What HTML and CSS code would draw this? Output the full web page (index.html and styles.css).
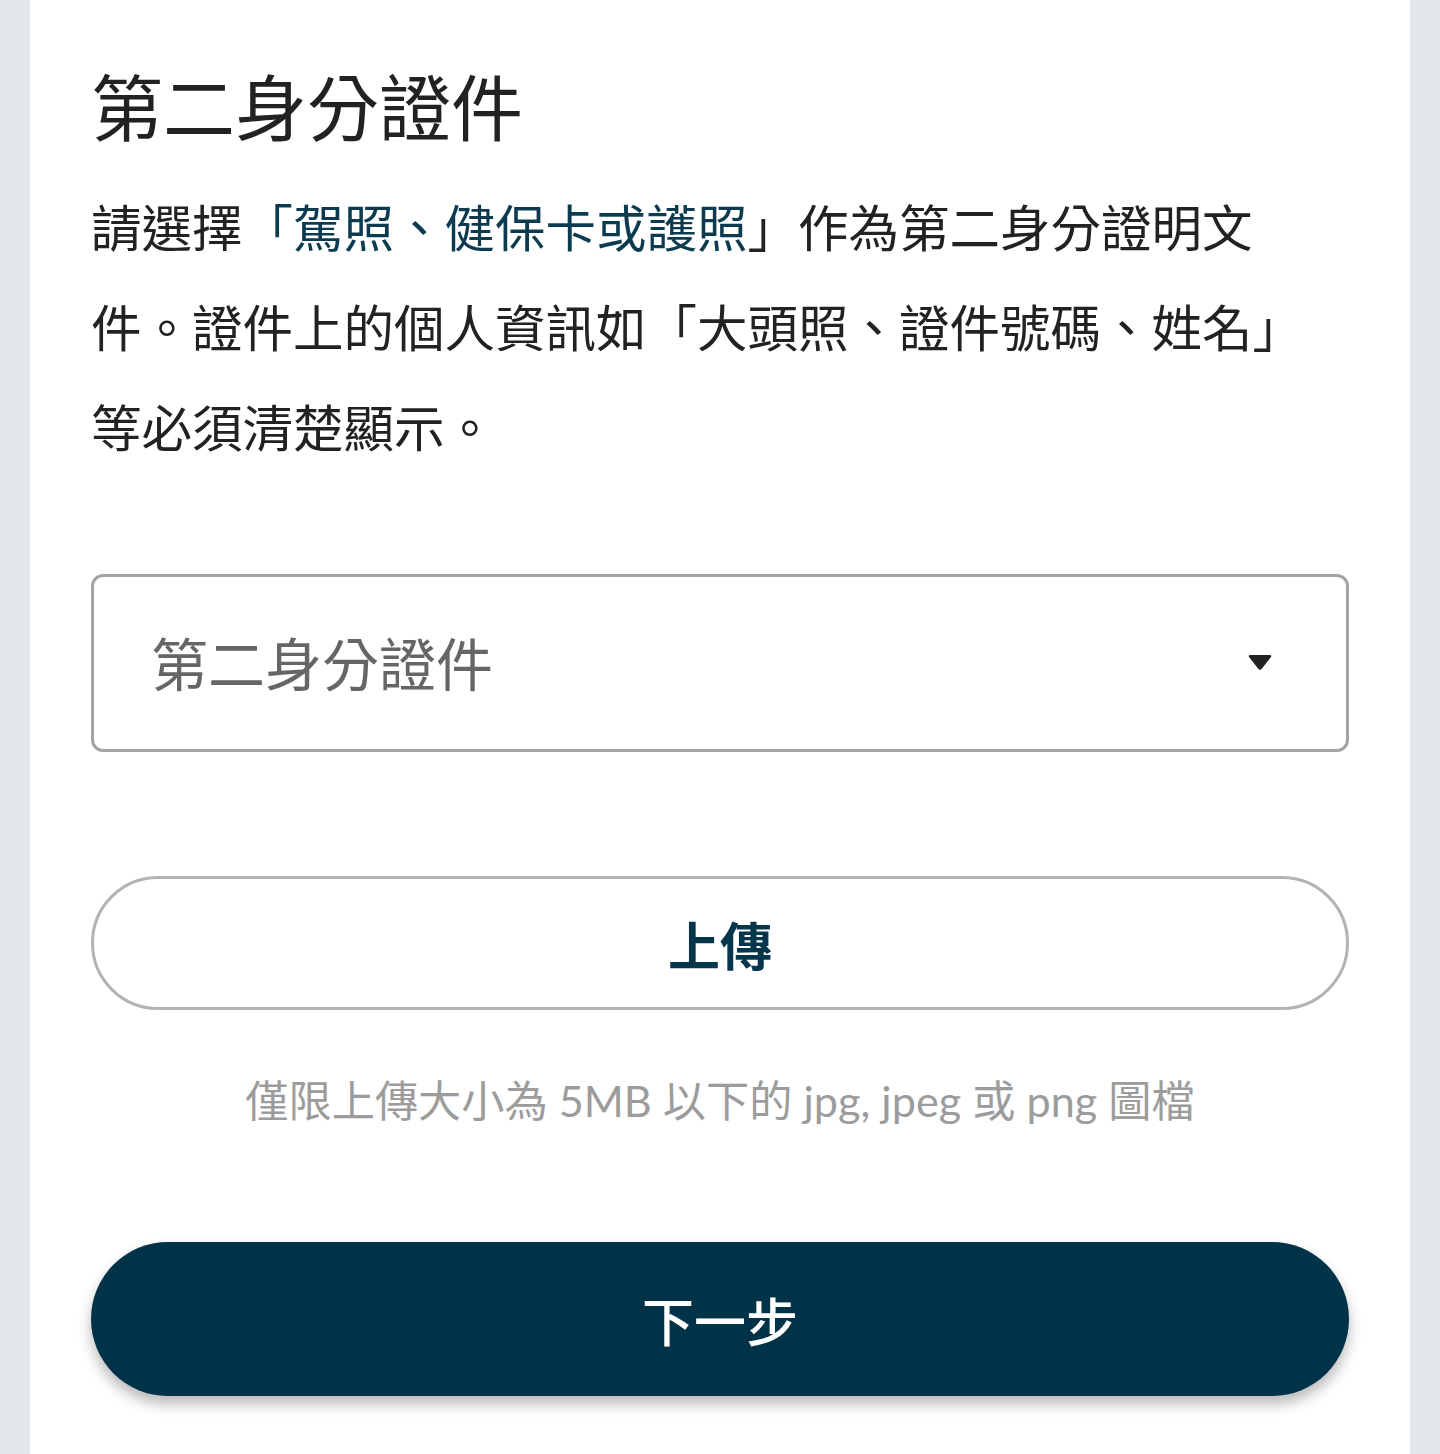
FILE: index.html
```html
<!DOCTYPE html>
<html lang="zh-Hant">
<head>
<meta charset="utf-8">
<title>第二身分證件</title>
<link rel="stylesheet" href="styles.css">
</head>
<body>
<main class="card">
  <h1 class="title">第二身分證件</h1>
  <p class="intro">請選擇<span class="accent">「駕照、健保卡或護照</span>」作為第二身分證明文件。證件上的個人資訊如「大頭照、證件號碼、姓名」等必須清楚顯示。</p>
  <div class="select">
    <span class="select-label">第二身分證件</span>
    <svg class="caret" width="26" height="18" viewBox="0 0 26 18" aria-hidden="true">
      <path d="M3.5 1 H22.5 Q25.5 1 23.6 3.4 L15 14.6 Q13 17 11 14.6 L2.4 3.4 Q0.5 1 3.5 1 Z" fill="#222"/>
    </svg>
  </div>
  <button class="upload" type="button">上傳</button>
  <p class="hint">僅限上傳大小為 5MB 以下的 jpg, jpeg 或 png 圖檔</p>
  <button class="next" type="button">下一步</button>
</main>
</body>
</html>
```
FILE: styles.css
```css
html, body {
  margin: 0;
  padding: 0;
}
body {
  background: #e2e7ea;
  font-family: "Noto Sans CJK TC", "Noto Sans", sans-serif;
  color: #222;
}
.card {
  margin: 0 30px;
  min-height: 1454px;
  background: #ffffff;
  padding: 54px 61px 0;
  box-sizing: border-box;
  display: flex;
  flex-direction: column;
}
.title {
  margin: 0;
  font-size: 72px;
  font-weight: 400;
  line-height: 100px;
  color: #222;
}
.intro {
  margin: 21px 0 0;
  max-width: 1240px;
  font-size: 50.5px;
  line-height: 100px;
  color: #222;
}
.accent {
  color: #0c3b50;
}
.select {
  margin-top: 99px;
  height: 178px;
  box-sizing: border-box;
  border: 3px solid #a3a3a3;
  border-radius: 12px;
  display: flex;
  align-items: center;
  justify-content: space-between;
  padding: 0 73px 4px 57px;
}
.select-label {
  font-size: 57px;
  color: #666;
  line-height: 1;
}
.caret {
  display: block;
  margin-top: 4px;
}
.upload {
  margin-top: 124px;
  height: 134px;
  border: 3px solid #b3b3b3;
  border-radius: 67px;
  background: #fff;
  font-family: "Noto Sans CJK TC", sans-serif;
  font-size: 52px;
  font-weight: 700;
  color: #06364b;
  padding: 0;
  cursor: pointer;
}
.hint {
  margin: 60px 0 0;
  text-align: center;
  font-family: Lato, "Noto Sans CJK TC", sans-serif;
  font-size: 43.2px;
  line-height: 60px;
  color: #9c9c9c;
}
.next {
  margin-top: 112px;
  height: 154px;
  border: none;
  border-radius: 77px;
  background: #003248;
  color: #fff;
  font-family: "Noto Sans CJK TC", sans-serif;
  font-size: 52px;
  font-weight: 500;
  padding: 0;
  box-shadow: 0 8px 14px rgba(0, 0, 0, 0.28);
  cursor: pointer;
}
```
